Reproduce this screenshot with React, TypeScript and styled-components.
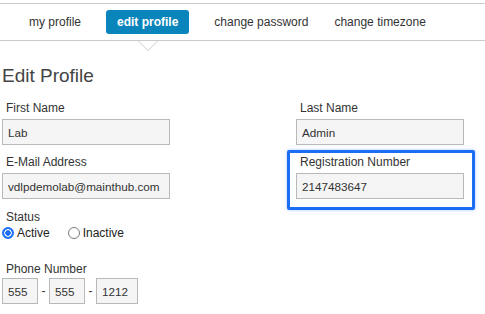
import styled, { createGlobalStyle } from "styled-components";

interface TabProps {
  $active?: boolean;
}

interface BoxProps {
  $width: number;
}

const GlobalStyle = createGlobalStyle`
  body {
    margin: 0;
    background: #fff;
    font-family: "Liberation Sans", Arial, sans-serif;
    color: #333;
  }
`;

const Page = styled.div`
  width: 485px;
  padding-top: 3px;
`;

const TabBar = styled.nav`
  display: flex;
  align-items: center;
  gap: 14px;
  height: 36px;
  padding-left: 18px;
  border-top: 1px solid #cacaca;
  border-bottom: 1px solid #cacaca;
`;

const Tab = styled.a<TabProps>`
  position: relative;
  height: 24px;
  line-height: 24px;
  padding: 0 11px;
  border-radius: 3px;
  font-size: 12px;
  font-weight: ${(props) => (props.$active ? "bold" : "normal")};
  color: ${(props) => (props.$active ? "#fff" : "#333")};
  background: ${(props) => (props.$active ? "#0a85bc" : "transparent")};
  white-space: nowrap;
  cursor: pointer;

  &:last-child {
    margin-left: -10px;
  }

  ${(props) =>
    props.$active &&
    `
    &::before,
    &::after {
      content: "";
      position: absolute;
      left: 50%;
      width: 0;
      height: 0;
      border-style: solid;
      border-color: transparent;
    }
    &::before {
      top: 30px;
      margin-left: -11px;
      border-width: 11px 11px 0 11px;
      border-top-color: #cacaca;
    }
    &::after {
      top: 31px;
      margin-left: -9px;
      border-width: 9px 9px 0 9px;
      border-top-color: #fff;
    }
  `}
`;

const Content = styled.main`
  padding-left: 2px;
`;

const Title = styled.h1`
  margin: 24px 0 14px;
  font-size: 19px;
  line-height: 22px;
  font-weight: normal;
  color: #444;
`;

const FieldGrid = styled.div`
  display: grid;
  grid-template-columns: 168px 168px;
  column-gap: 126px;
  row-gap: 10px;
`;

const Field = styled.div`
  position: relative;
  display: flex;
  flex-direction: column;
`;

const Highlight = styled.div`
  position: absolute;
  top: -5px;
  left: -9px;
  right: -11px;
  bottom: -11px;
  border: 3px solid #1b6ef3;
  border-radius: 2px;
  box-shadow: 0 0 3px rgba(27, 110, 243, 0.45);
  pointer-events: none;
`;

const Label = styled.label`
  display: block;
  padding-left: 4px;
  margin-bottom: 4px;
  font-size: 12px;
  line-height: 14px;
  color: #333;
`;

const TextBox = styled.input<BoxProps>`
  box-sizing: border-box;
  width: ${(props) => props.$width}px;
  height: 26px;
  padding: 0 5px;
  border: 1px solid #b9b9b9;
  border-radius: 0;
  background: #f5f5f5;
  font-family: "Liberation Sans", Arial, sans-serif;
  font-size: 11.7px;
  color: #333;
  outline: none;
`;

const Section = styled.div`
  margin-top: 11px;
`;

const RadioRow = styled.div`
  display: flex;
  align-items: center;
  gap: 18px;
  height: 15px;
  margin-top: -3px;
`;

const RadioOption = styled.label`
  display: flex;
  align-items: center;
  gap: 3px;
  font-size: 12px;
  color: #222;
`;

const Radio = styled.input`
  appearance: none;
  box-sizing: border-box;
  width: 12px;
  height: 12px;
  margin: 0;
  border: 1px solid #7b7b7b;
  border-radius: 50%;
  background: #fff;

  &:checked {
    border: 1px solid #1a6ff5;
    background: radial-gradient(circle, #1a6ff5 0 2.5px, #fff 3px 3.5px, #1a6ff5 4px);
  }
`;

const PhoneSection = styled.div`
  margin-top: 22px;
`;

const PhoneRow = styled.div`
  display: flex;
  align-items: center;
  margin-top: -2px;
`;

const Dash = styled.span`
  width: 11px;
  text-align: center;
  font-size: 12px;
  color: #333;
`;

const App = () => {
  return (
    <Page>
      <GlobalStyle />
      <TabBar>
        <Tab>my profile</Tab>
        <Tab $active>edit profile</Tab>
        <Tab>change password</Tab>
        <Tab>change timezone</Tab>
      </TabBar>
      <Content>
        <Title>Edit Profile</Title>
        <FieldGrid>
          <Field>
            <Label>First Name</Label>
            <TextBox $width={168} defaultValue="Lab" />
          </Field>
          <Field>
            <Label>Last Name</Label>
            <TextBox $width={168} defaultValue="Admin" />
          </Field>
          <Field>
            <Label>E-Mail Address</Label>
            <TextBox $width={168} defaultValue="vdlpdemolab@mainthub.com" />
          </Field>
          <Field>
            <Label>Registration Number</Label>
            <TextBox $width={168} defaultValue="2147483647" />
            <Highlight />
          </Field>
        </FieldGrid>
        <Section>
          <Label>Status</Label>
          <RadioRow>
            <RadioOption>
              <Radio type="radio" name="status" defaultChecked />
              Active
            </RadioOption>
            <RadioOption>
              <Radio type="radio" name="status" />
              Inactive
            </RadioOption>
          </RadioRow>
        </Section>
        <PhoneSection>
          <Label>Phone Number</Label>
          <PhoneRow>
            <TextBox $width={36} defaultValue="555" />
            <Dash>-</Dash>
            <TextBox $width={36} defaultValue="555" />
            <Dash>-</Dash>
            <TextBox $width={42} defaultValue="1212" />
          </PhoneRow>
        </PhoneSection>
      </Content>
    </Page>
  );
};

export default App;
